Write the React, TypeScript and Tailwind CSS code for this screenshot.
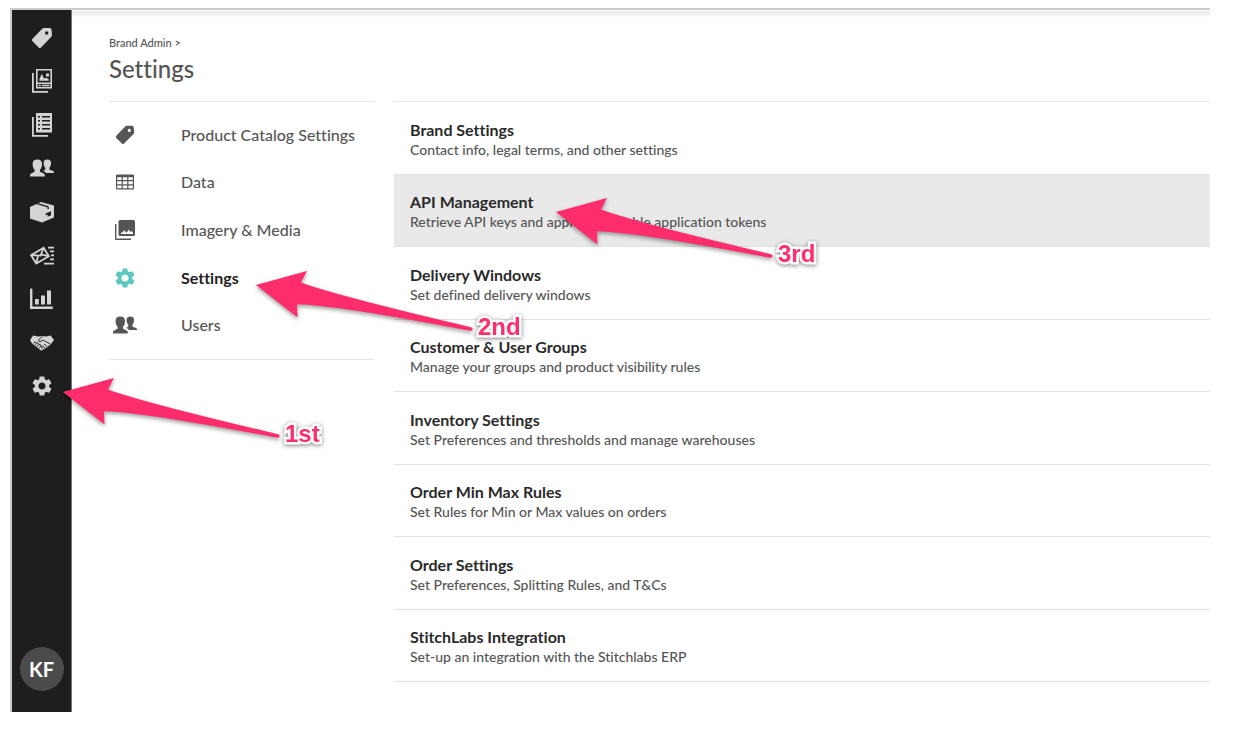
import React from 'react';
import { MdSettings } from 'react-icons/md';

type IconProps = { className?: string };

const TagIcon = ({ className }: IconProps) => (
  <svg viewBox="0 0 24 24" fill="currentColor" className={className} aria-hidden="true">
    <path
      fillRule="evenodd"
      d="M12.2 2.8Q13 2 14 2H19.5Q21.5 2 21.6 4L22 9Q22 10 21.3 10.8L11 21.4Q9.8 22.5 8.6 21.4L2.5 15.3Q1.4 14.1 2.5 12.8ZM16.7 5.3a1.7 1.7 0 1 0 0 3.4a1.7 1.7 0 1 0 0-3.4Z"
    />
  </svg>
);

const LinesheetIcon = ({ className }: IconProps) => (
  <svg viewBox="0 0 24 28" fill="currentColor" className={className} aria-hidden="true">
    <path d="M2 6H3.8V24H18V25.7H2Z" />
    <path
      fillRule="evenodd"
      d="M6 2H22V21.6H6ZM7.6 3.6V15.4H20.4V3.6ZM7.6 17V20H20.4V17Z"
    />
    <path d="M9.5 13.8V12L11.8 6.8L14 11.5L16.5 10.8L18.8 12.5V13.8ZM16 6.4H19V9.4H16ZM8.6 17.8H10.8V19.2H8.6ZM12 17.8H19.4V19.2H12Z" />
  </svg>
);

const ListIcon = ({ className }: IconProps) => (
  <svg viewBox="0 0 24 28" fill="currentColor" className={className} aria-hidden="true">
    <path d="M2 6H3.8V24H18V25.7H2Z" />
    <path
      fillRule="evenodd"
      d="M6 2H22V21.6H6ZM8 5V6.5H10V5ZM12 5V6.5H20V5ZM8 9V10.5H10V9ZM12 9V10.5H20V9ZM8 13V14.5H10V13ZM12 13V14.5H20V13ZM8 17V18.5H10V17ZM12 17V18.5H20V17Z"
    />
  </svg>
);

const UsersIcon = ({ className }: IconProps) => (
  <svg viewBox="0 0 24 18" fill="currentColor" className={className} aria-hidden="true">
    <path d="M7.3 0.5C10.6 0.5 12.1 2.2 12 5.2C11.9 7.8 11.2 9.6 10 10.8V12.4C10.6 13.6 14.4 13.8 14.8 16V17.5H0V16C0.4 13.8 4 13.6 4.6 12.4V10.8C3.4 9.6 2.7 7.8 2.6 5.2C2.5 2.2 4 0.5 7.3 0.5Z" />
    <path d="M17.3 0.5C20 0.5 21.1 1.8 21 4.2C20.9 6.4 20.3 7.8 19.4 8.8V10.2C19.9 11.2 23.6 11.4 24 12.9V14H16C15 12.8 13.8 12.2 13 11.8C14 11.4 15 11.2 15.3 10.2V8.8C14.3 7.8 13.7 6.2 13.6 4.2C13.5 1.8 14.6 0.5 17.3 0.5Z" />
  </svg>
);

const BoxIcon = ({ className }: IconProps) => (
  <svg viewBox="0 0 24 22" fill="currentColor" className={className} aria-hidden="true">
    <path d="M0 6L11 1L24 4.4V16.4L12 21.4L0 17.6Z" />
    <path d="M7 2.6L17.6 5.6Q18.4 6 18.2 8" fill="none" strokeWidth="1.5" className="stroke-[#1e1e1e]" />
    <path d="M15.6 12.4L21 10.2V14.2L17.6 15.8V13.4L15.6 14.2Z" className="fill-[#1e1e1e]" />
  </svg>
);

const MailIcon = ({ className }: IconProps) => (
  <svg viewBox="0 0 24 20" fill="none" stroke="currentColor" className={className} aria-hidden="true">
    <path strokeWidth="1.8" d="M1 9.2L13.6 1.8L18.8 10.2L6.3 17.6ZM1 9.2L10.6 9.6L13.6 1.8M6.3 17.6L8 9.8M18.8 10.2L11.4 8.6" />
    <path strokeWidth="1.6" d="M18 1.6H24M20 5.4H24M21 9.4H24M20 13.4H24M14 17.6H24" />
  </svg>
);

const ChartIcon = ({ className }: IconProps) => (
  <svg viewBox="0 0 24 22" fill="currentColor" className={className} aria-hidden="true">
    <path d="M0 1.5Q0 0.5 1.2 0.5Q2.4 0.5 2.4 1.5V18.6H22Q23 18.6 23 19.8Q23 21 22 21H0Z" />
    <path d="M5 11H8.8V16.6H5ZM11 7.6H15V16.6H11ZM17 2.6H21V16.6H17Z" />
  </svg>
);

const HandshakeIcon = ({ className }: IconProps) => (
  <svg viewBox="0 0 24 16" fill="currentColor" className={className} aria-hidden="true">
    <path d="M0 5L3.2 0.6L8 1.6L12 1L16 1.4L20.6 0.4L24 5L21.4 8.4Q21 10.4 18.8 10.6Q18.2 12.4 16.4 12.6Q15.4 14.2 13.6 14Q12.4 16 10.6 15.2L3.4 9.6L2 8.6Z" />
    <g fill="none" strokeWidth="0.9" className="stroke-[#1e1e1e]">
      <path d="M12.4 1.4L8.6 4.8Q8.2 6.6 10 6.6L13 5L20.8 9.4" />
      <path d="M3.2 8.4L5.4 6.8L6.6 8.2L8 7.8L8.8 9.6L10.4 9.6L10.8 11.4L12.2 11.8L11.8 14" />
      <path d="M4.8 10.4L6.6 8.2M6.8 12L8.8 9.6M8.8 13.6L10.8 11.4M14 9L17.4 11.8M12.4 10.6L15 13.2" />
    </g>
  </svg>
);

const TableIcon = ({ className }: IconProps) => (
  <svg viewBox="0 0 18 16" fill="currentColor" className={className} aria-hidden="true">
    <path
      fillRule="evenodd"
      d="M1 0.5H17Q18 0.5 18 1.5V14.5Q18 15.5 17 15.5H1Q0 15.5 0 14.5V1.5Q0 0.5 1 0.5ZM1.2 3.2V6H5.6V3.2ZM6.8 3.2V6H11.2V3.2ZM12.4 3.2V6H16.8V3.2ZM1.2 7.2V10.2H5.6V7.2ZM6.8 7.2V10.2H11.2V7.2ZM12.4 7.2V10.2H16.8V7.2ZM1.2 11.4V14.3H5.6V11.4ZM6.8 11.4V14.3H11.2V11.4ZM12.4 11.4V14.3H16.8V11.4Z"
    />
  </svg>
);

const ImageryIcon = ({ className }: IconProps) => (
  <svg viewBox="0 0 20 20" fill="currentColor" className={className} aria-hidden="true">
    <path d="M0 4H1.4V18.6H16V20H0.8Q0 20 0 19Z" />
    <path
      fillRule="evenodd"
      d="M5 0H18.5Q20 0 20 1.5V14.5Q20 16 18.5 16H5Q3.5 16 3.5 14.5V1.5Q3.5 0 5 0ZM6 14H18V12.5L16.5 11L15 12L13.8 9.6L11.6 12.8L9 10.2L7.6 12.4L6 12.6Z"
    />
  </svg>
);

const railItems = [
  { label: 'Products', icon: <TagIcon className="size-6" /> },
  { label: 'Linesheets', icon: <LinesheetIcon className="h-7 w-6" /> },
  { label: 'Orders', icon: <ListIcon className="h-7 w-6" /> },
  { label: 'Customers', icon: <UsersIcon className="h-[18px] w-6" /> },
  { label: 'Shipments', icon: <BoxIcon className="h-[22px] w-6" /> },
  { label: 'Campaigns', icon: <MailIcon className="h-5 w-6" /> },
  { label: 'Reports', icon: <ChartIcon className="h-[22px] w-6" /> },
  { label: 'Partners', icon: <HandshakeIcon className="h-4 w-6" /> },
  { label: 'Brand Admin', icon: <MdSettings className="size-6" /> },
];

const menuItems = [
  { label: 'Product Catalog Settings', icon: <TagIcon className="size-[22px]" /> },
  { label: 'Data', icon: <TableIcon className="h-4 w-[18px]" /> },
  { label: 'Imagery & Media', icon: <ImageryIcon className="size-5" /> },
  { label: 'Settings', icon: <MdSettings className="size-6" />, active: true },
  { label: 'Users', icon: <UsersIcon className="h-[18px] w-6" /> },
];

const settings = [
  { title: 'Brand Settings', text: 'Contact info, legal terms, and other settings' },
  { title: 'API Management', text: 'Retrieve API keys and approve / enable application tokens', active: true },
  { title: 'Delivery Windows', text: 'Set defined delivery windows' },
  { title: 'Customer & User Groups', text: 'Manage your groups and product visibility rules' },
  { title: 'Inventory Settings', text: 'Set Preferences and thresholds and manage warehouses' },
  { title: 'Order Min Max Rules', text: 'Set Rules for Min or Max values on orders' },
  { title: 'Order Settings', text: 'Set Preferences, Splitting Rules, and T&Cs' },
  { title: 'StitchLabs Integration', text: 'Set-up an integration with the Stitchlabs ERP' },
];

// Callouts drawn on top of the page, placed from the frame's corner
const steps = [
  { label: '1st', place: 'left-[51px] top-[368px]' },
  { label: '2nd', place: 'left-[244px] top-[261px]' },
  { label: '3rd', place: 'left-[544px] top-[188px]' },
];

const StepArrow = ({ label, place }: { label: string; place: string }) => (
  <div className={`pointer-events-none absolute flex items-end gap-1 ${place}`}>
    <svg viewBox="0 0 218 64" className="h-16 w-[218px] overflow-visible drop-shadow-[0_2px_2px_rgba(0,0,0,0.4)]" aria-hidden="true">
      <path
        fill="#ff2d6b"
        d="M0 14L51 0L45 11.5Q82 25 215 56.2Q217 57 216.6 58.6Q216 60 214 59.8Q80 34 41 33.2L41.5 46.5Z"
      />
    </svg>
    <span className="font-['Liberation_Sans',sans-serif] text-[24px] leading-4 font-bold text-[#ff2d6b] drop-shadow-[0_1px_2px_rgba(0,0,0,0.5)] [-webkit-text-stroke:5px_white] [paint-order:stroke_fill]">
      {label}
    </span>
  </div>
);

const SideRail = () => (
  <aside className="flex w-[60px] shrink-0 flex-col items-center justify-between border-r border-[#777] bg-[#1e1e1e] pt-1.5 pb-[21px] text-[#d4d4d4]">
    <nav className="grid min-h-[392px] w-full auto-rows-fr">
      {railItems.map((item) => (
        <a key={item.label} href="#" aria-label={item.label} className="flex items-center justify-center">
          {item.icon}
        </a>
      ))}
    </nav>
    <button type="button" className="size-11 rounded-full bg-[#4b4b4b] text-[20px] font-bold text-white">
      KF
    </button>
  </aside>
);

const App: React.FC = () => {
  return (
    <div className="bg-white pt-2 pr-[26px] pl-[10px] font-[Lato,sans-serif] font-medium text-[#555] [font-variant-ligatures:none]">
      <div className="relative flex border-t-2 border-l-2 border-[#ccc]">
        <SideRail />

        <main className="min-w-0 flex-1 pb-[30px]">
          <div className="h-2 border-t border-white bg-linear-to-b from-[#e9e9e9] to-white" />

          <header className="pt-4 pl-[37px]">
            <p className="text-[11px] leading-[18px]">
              <a href="#">Brand Admin</a> &gt;
            </p>
            <h1 className="text-[24px] leading-[34px]">Settings</h1>
          </header>

          <div className="grid grid-cols-[265px_minmax(0,1fr)] items-start gap-5 pt-[15px] pl-[37px]">
            <nav className="border-y border-[#e5e5e5] pt-[9px] pb-[10px]">
              <ul className="grid min-h-[238px] auto-rows-fr">
                {menuItems.map((item) => (
                  <li key={item.label} className="flex">
                    <a
                      href="#"
                      className={`flex flex-1 items-center gap-10 text-[16px] leading-6 ${
                        item.active ? 'font-bold text-[#222]' : ''
                      }`}
                    >
                      <span className={`flex w-8 justify-center ${item.active ? 'text-[#5cc8c0]' : ''}`}>
                        {item.icon}
                      </span>
                      {item.label}
                    </a>
                  </li>
                ))}
              </ul>
            </nav>

            <ul className="grid min-h-[581px] auto-rows-fr border-t border-[#e5e5e5]">
              {settings.map((item) => (
                <li key={item.title} className={`flex border-b border-[#e2e2e2] ${item.active ? 'bg-[#e9e9e9]' : ''}`}>
                  <a href="#" className="flex flex-1 flex-col justify-center px-4 pt-1">
                    <span className="text-[16px] leading-5 font-bold text-[#2a2a2a]">{item.title}</span>
                    <span className="text-[14px] leading-5">{item.text}</span>
                  </a>
                </li>
              ))}
            </ul>
          </div>
        </main>

        {steps.map((step) => (
          <StepArrow key={step.label} label={step.label} place={step.place} />
        ))}
      </div>
    </div>
  );
};

export default App;
